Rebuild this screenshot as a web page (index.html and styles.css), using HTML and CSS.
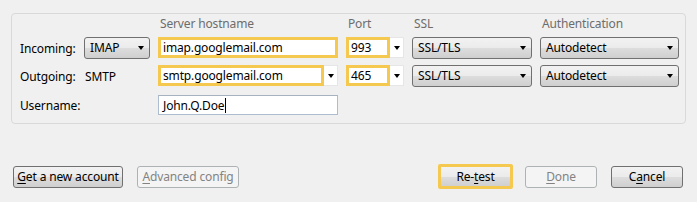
FILE: index.html
```html
<!DOCTYPE html>
<html>
<head>
<meta charset="utf-8">
<link rel="stylesheet" href="styles.css">
</head>
<body>
<div class="panel">
  <div class="grid">
    <div class="head"></div>
    <div class="head"></div>
    <div class="head">Server hostname</div>
    <div class="head">Port</div>
    <div class="head">SSL</div>
    <div class="head">Authentication</div>

    <div class="label r1">Incoming:</div>
    <div class="select r1"><span class="val">IMAP</span><span class="arrow"></span></div>
    <div class="field hl r1h">imap.googlemail.com</div>
    <div class="combo r1h"><div class="field hl">993</div><div class="drop"><span class="arrow"></span></div></div>
    <div class="select r1"><span class="val">SSL/TLS</span><span class="arrow"></span></div>
    <div class="select r1"><span class="val">Autodetect</span><span class="arrow"></span></div>

    <div class="label r2">Outgoing:</div>
    <div class="label plain r2">SMTP</div>
    <div class="combo r2h"><div class="field hl">smtp.googlemail.com</div><div class="drop"><span class="arrow"></span></div></div>
    <div class="combo r2h"><div class="field hl">465</div><div class="drop"><span class="arrow"></span></div></div>
    <div class="select r2"><span class="val">SSL/TLS</span><span class="arrow"></span></div>
    <div class="select r2"><span class="val">Autodetect</span><span class="arrow"></span></div>

    <div class="label r3">Username:</div>
    <div class="r3"></div>
    <div class="field text r3">John.Q.Doe<span class="caret"></span></div>
  </div>
</div>
<div class="buttons">
  <div class="btn w-get"><u>G</u>et a new account</div>
  <div class="btn disabled w-adv"><u>A</u>dvanced config</div>
  <div class="btn focus w-retest">Re-<u>t</u>est</div>
  <div class="btn disabled w-done"><u>D</u>one</div>
  <div class="btn w-cancel">C<u>a</u>ncel</div>
</div>
</body>
</html>
```
FILE: styles.css
```css
html, body {
  margin: 0;
  padding: 0;
  background: #f0f0f0;
  font-family: "Noto Sans", "Open Sans", sans-serif;
  font-size: 12px;
  letter-spacing: -0.15px;
  color: #000;
  width: 697px;
  height: 202px;
  overflow: hidden;
}

.panel {
  margin: 13px 11px 0 11px;
  height: 109px;
  border: 1px solid #d9d9d9;
  border-radius: 4px;
  box-sizing: content-box;
  padding-left: 8px;
}

.grid {
  display: grid;
  grid-template-columns: 56px 66px 180px 58px 120px 139px;
  grid-template-rows: 23px 28px 30px 20px;
  column-gap: 8px;
}

.head {
  color: #6d6d6d;
  padding: 2px 0 0 2px;
  line-height: 16px;
  white-space: nowrap;
}

.label {
  display: flex;
  align-items: center;
  height: 22px;
  white-space: nowrap;
}
.label.plain { padding-left: 1px; }
.r3.label { height: 20px; }

.r1, .r2 { height: 22px; }
.r1h, .r2h { height: 21px; }
.r3 { height: 20px; }

.select {
  box-sizing: border-box;
  display: flex;
  align-items: center;
  justify-content: space-between;
  border: 1px solid #707070;
  border-radius: 3px;
  background: linear-gradient(#f2f2f2 0%, #ebebeb 50%, #dddddd 51%, #cfcfcf 100%);
  padding: 0 5px 0 5px;
}
.select .val { line-height: 16px; }

.arrow {
  display: block;
  width: 0;
  height: 0;
  border-left: 3.5px solid transparent;
  border-right: 3.5px solid transparent;
  border-top: 4px solid #000;
}

.field {
  box-sizing: border-box;
  background: #fff;
  display: flex;
  align-items: center;
  padding-left: 2px;
  white-space: nowrap;
  overflow: hidden;
}
.field.hl {
  border: 3px solid #f5c94f;
}
.field.text {
  border: 1px solid #abbdcf;
  border-top-color: #a6b2c0;
  padding-left: 4px;
}
.caret {
  display: inline-block;
  width: 1px;
  height: 15px;
  background: #000;
  margin-left: 1px;
}

.combo {
  display: flex;
  box-sizing: border-box;
}
.combo .field { flex: 1; height: 100%; }
.combo .drop {
  width: 14px;
  box-sizing: border-box;
  background: #fff;
  border: 1px solid #e6e6e6;
  border-left: none;
  display: flex;
  align-items: center;
  justify-content: center;
}

.buttons {
  display: flex;
  align-items: center;
  margin-top: 40px;
  padding: 0 14px 0 13px;
  gap: 14px;
}
.btn {
  box-sizing: border-box;
  height: 22px;
  border: 1px solid #707070;
  border-radius: 3px;
  background: linear-gradient(#f2f2f2 0%, #ebebeb 50%, #dddddd 51%, #cfcfcf 100%);
  display: flex;
  align-items: center;
  justify-content: center;
  white-space: nowrap;
  line-height: 16px;
}
.btn u { text-underline-offset: 2px; }
.btn.disabled {
  border-color: #adb2b5;
  background: #f4f4f4;
  color: #838383;
}
.btn.focus {
  height: 25px;
  border: 3px solid #f5c94f;
  border-radius: 2px;
}
.w-get { width: 110px; }
.w-adv { width: 102px; }
.w-retest { width: 75px; margin-left: auto; margin-right: -2px; }
.w-done { width: 72px; }
.w-cancel { width: 72px; }
```
